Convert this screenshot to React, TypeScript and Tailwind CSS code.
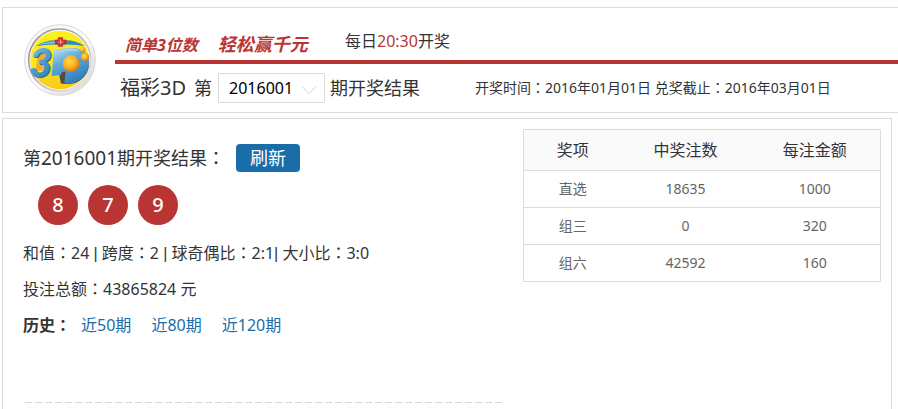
import { useState } from "react";

interface IPrize {
  name: string;
  count: number;
  amount: number;
}

const PERIODS = ["2016001"];
const BALLS = [8, 7, 9];
const HISTORY = [50, 80, 120];
const PRIZES: IPrize[] = [
  { name: "直选", count: 18635, amount: 1000 },
  { name: "组三", count: 0, amount: 320 },
  { name: "组六", count: 42592, amount: 160 },
];

// The TC face centres the full-width colon in its cell
const Colon = () => (
  <span lang="zh-TW" className="font-['Noto_Sans_CJK_TC',sans-serif] leading-none">
    ：
  </span>
);

const Bar = () => <span className="font-['Liberation_Sans',sans-serif] leading-none">|</span>;

const Logo = () => (
  <svg viewBox="69 71 216 216" className="size-[72px] shrink-0" role="img" aria-label="福彩3D">
    <defs>
      <linearGradient id="ring" x1="0" y1="0" x2="1" y2="1">
        <stop offset="0" stopColor="#f4f2f2" />
        <stop offset="0.5" stopColor="#ffffff" />
        <stop offset="1" stopColor="#d2cecd" />
      </linearGradient>
      <linearGradient id="inner" x1="0" y1="0" x2="1" y2="1">
        <stop offset="0" stopColor="#8f8583" />
        <stop offset="1" stopColor="#efeceb" />
      </linearGradient>
      <linearGradient id="sun" x1="0" y1="0" x2="0" y2="1">
        <stop offset="0" stopColor="#fdf01c" />
        <stop offset="0.6" stopColor="#fbe51c" />
        <stop offset="1" stopColor="#f8c81d" />
      </linearGradient>
      <linearGradient id="blue" x1="0" y1="0" x2="0.5" y2="1">
        <stop offset="0" stopColor="#c4e3f5" />
        <stop offset="0.45" stopColor="#5ea9d8" />
        <stop offset="1" stopColor="#3080bd" />
      </linearGradient>
      <radialGradient id="ball" cx="0.4" cy="0.35" r="0.65">
        <stop offset="0" stopColor="#ffdc4d" />
        <stop offset="0.6" stopColor="#fcae1c" />
        <stop offset="1" stopColor="#dd7b10" />
      </radialGradient>
    </defs>
    <circle cx="177" cy="179" r="106" fill="url(#ring)" stroke="#d9d6d6" strokeWidth="3" />
    <circle cx="176" cy="179" r="93" fill="#fbfafa" stroke="url(#inner)" strokeWidth="5" />
    <circle cx="176" cy="179" r="88" fill="url(#sun)" />
    <path d="M105 138 Q138 116 178 121 Q220 116 251 138 Q218 130 178 133 Q138 130 105 138Z" fill="#318ac5" />
    <path d="M112 134 Q142 121 166 124 L166 129 Q140 127 112 134Z" fill="#8cc9e8" />
    <path d="M172 112 h13 v7 h10 v12 h-10 v7 h-13 v-7 h-9 v-12 h9z" fill="#d92b35" stroke="#a32635" strokeWidth="2" />
    <path d="M171 125 h16 M179 117 v16" stroke="#f3a0a6" strokeWidth="3" />
    <path
      d="M176 152 Q202 143 228 145 Q252 149 261 172 Q272 212 239 239 Q219 254 186 250 L180 250 L174 222 L157 221 Z"
      fill="#584b38"
    />
    <path
      d="M158 148 Q204 140 229 144 Q254 149 263 170 Q271 207 240 236 Q218 252 190 249 L194 215 Q181 211 180 224 L152 227 Z"
      fill="url(#blue)"
    />
    <path d="M110 162 L146 158 L138 208 L104 212 Z" fill="#f4ad27" />
    <text
      x="86"
      y="233"
      fontFamily="Lato, sans-serif"
      fontSize="122"
      fontWeight="900"
      fontStyle="italic"
      fill="#2a6ea3"
    >
      3
    </text>
    <text
      x="83"
      y="231"
      fontFamily="Lato, sans-serif"
      fontSize="122"
      fontWeight="900"
      fontStyle="italic"
      fill="url(#blue)"
    >
      3
    </text>
    <path d="M178 153 Q205 145 230 150" fill="none" stroke="#a9d7f0" strokeWidth="5" />
    <circle cx="210" cy="190" r="25" fill="url(#ball)" />
    <circle cx="252" cy="170" r="12" fill="url(#ball)" />
    <circle cx="245" cy="148" r="8" fill="url(#ball)" />
  </svg>
);

const Header = () => {
  const [period, setPeriod] = useState(PERIODS[0]);

  return (
    <header className="ml-0.5 flex border border-r-0 border-[#dcdcdc] pt-4 pl-[21px]">
      <Logo />
      <div className="-mt-4 ml-[19px] flex-1">
        <div className="flex h-14 items-center border-b-4 border-[#b83533] pl-2.5 text-base">
          <p className="mt-5 flex w-[220px] items-baseline gap-5 font-bold text-[#b83533] italic">
            <span>简单3位数</span>
            <span className="text-lg">轻松赢千元</span>
          </p>
          <p className="mt-3.5">
            每日<span className="text-[#b83533]">20:30</span>开奖
          </p>
        </div>
        <div className="flex h-12 items-center pl-[5px]">
          <label htmlFor="period" className="flex items-baseline gap-2 text-lg">
            <span className="text-xl">福彩3D</span>第
          </label>
          <div className="relative mr-[5px] ml-1.5">
            <select
              id="period"
              value={period}
              onChange={(e) => setPeriod(e.target.value)}
              className="block h-[30px] w-[107px] appearance-none border border-[#dcdcdc] bg-white pl-2.5 text-base text-black"
            >
              {PERIODS.map((item) => (
                <option key={item}>{item}</option>
              ))}
            </select>
            <svg
              viewBox="0 0 16 10"
              className="pointer-events-none absolute top-3 right-2 h-2.5 w-4"
              fill="none"
              stroke="#d0d0d0"
            >
              <path d="M1 1.5 8 8.5 15 1.5" />
            </svg>
          </div>
          <span className="text-lg">期开奖结果</span>
          <p className="ml-[55px] text-sm whitespace-nowrap">
            开奖时间<Colon />2016年01月01日 兑奖截止<Colon />2016年03月01日
          </p>
        </div>
      </div>
    </header>
  );
};

const PrizeTable = () => (
  <table className="w-[358px] shrink-0 border-collapse self-start border border-[#dcdcdc] text-center">
    <thead>
      <tr className="h-[41px] bg-[#fafafa] text-base">
        <th className="w-[98px] font-normal">奖项</th>
        <th className="w-32 font-normal">中奖注数</th>
        <th className="font-normal">每注金额</th>
      </tr>
    </thead>
    <tbody className="text-sm text-[#666]">
      {PRIZES.map((prize) => (
        <tr key={prize.name} className="h-[37px] border-t border-[#dcdcdc]">
          <td>{prize.name}</td>
          <td>{prize.count}</td>
          <td>{prize.amount}</td>
        </tr>
      ))}
    </tbody>
  </table>
);

const Result = () => (
  <main className="mt-[5px] mr-1.5 ml-0.5 flex justify-between border border-b-0 border-[#dcdcdc] pt-2.5 pr-2.5 pb-1.5 pl-5">
    <section className="w-[480px]">
      <div className="mt-[15px] flex h-7 items-center">
        <h1 className="text-lg">
          第<span className="text-[19px] leading-none">2016001</span>期开奖结果<Colon />
        </h1>
        <button type="button" className="ml-[11px] h-7 w-16 rounded bg-[#1a6da9] text-lg leading-7 text-white">
          刷新
        </button>
      </div>
      <div className="mt-[13px] ml-[15px] flex gap-2.5">
        {BALLS.map((ball) => (
          <span
            key={ball}
            className="flex size-10 items-center justify-center rounded-full bg-[#b83533] text-xl font-medium text-white"
          >
            {ball}
          </span>
        ))}
      </div>
      <div className="mt-2.5 text-base leading-9">
        <p>
          和值<Colon />24 <Bar /> 跨度<Colon />2 <Bar /> 球奇偶比<Colon />2:1<Bar /> 大小比<Colon />3:0
        </p>
        <p>
          投注总额<Colon />43865824 元
        </p>
        <p className="flex">
          <b>
            历史<Colon />
          </b>
          <span className="ml-2.5 flex gap-5">
            {HISTORY.map((n) => (
              <a key={n} href={`#last-${n}`} className="text-[#1a6da9]">
                近{n}期
              </a>
            ))}
          </span>
        </p>
      </div>
      <div className="mt-[59px] ml-0.5 h-px bg-[repeating-linear-gradient(90deg,#d8d8d8_0_7px,transparent_7px_10px)]" />
    </section>
    <PrizeTable />
  </main>
);

export default function App() {
  return (
    <div className="bg-white pt-[7px] font-['Noto_Sans','Noto_Sans_CJK_SC',sans-serif] text-[#333]" lang="zh-CN">
      <Header />
      <Result />
    </div>
  );
}
